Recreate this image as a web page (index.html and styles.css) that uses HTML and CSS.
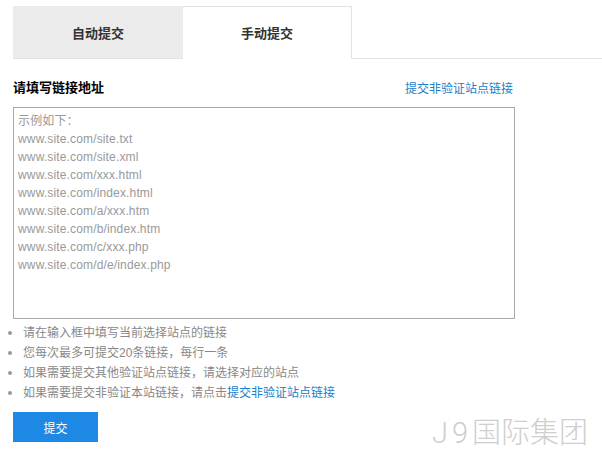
FILE: index.html
```html
<!DOCTYPE html>
<html lang="zh-CN">
<head>
    <meta charset="UTF-8">
    <title>手动提交</title>
    <link rel="stylesheet" href="styles.css">
</head>
<body>
    <div class="tabs">
        <div class="tab">自动提交</div>
        <div class="tab active">手动提交</div>
    </div>

    <div class="form-head">
        <h3>请填写链接地址</h3>
        <a href="#">提交非验证站点链接</a>
    </div>

    <div class="url-box">
        <div>示例如下：</div>
        <div>www.site.com/site.txt</div>
        <div>www.site.com/site.xml</div>
        <div>www.site.com/xxx.html</div>
        <div>www.site.com/index.html</div>
        <div>www.site.com/a/xxx.htm</div>
        <div>www.site.com/b/index.htm</div>
        <div>www.site.com/c/xxx.php</div>
        <div>www.site.com/d/e/index.php</div>
    </div>

    <ul class="tips">
        <li>请在输入框中填写当前选择站点的链接</li>
        <li>您每次最多可提交20条链接，每行一条</li>
        <li>如果需要提交其他验证站点链接，请选择对应的站点</li>
        <li>如果需要提交非验证本站链接，请点击<a href="#">提交非验证站点链接</a></li>
    </ul>

    <button class="submit-btn">提交</button>

    <div class="watermark"><span class="watermark-latin">J9</span>国际集团</div>
</body>
</html>
```

FILE: styles.css
```css
* {
    box-sizing: border-box;
}
html, body {
    height: 100%;
}
body {
    margin: 0;
    padding: 6px 0 0 13px;
    position: relative;
    overflow: hidden;
    background: #fff;
    font-family: "Liberation Sans", Arial, "Noto Sans CJK SC", sans-serif;
    font-size: 12px;
    color: #333;
}
a {
    color: #1a7fc9;
    text-decoration: none;
}
.tabs {
    display: flex;
    height: 53px;
    border-bottom: 1px solid #e2e2e2;
}
.tab {
    width: 170px;
    height: 52px;
    padding-top: 2px;
    line-height: 52px;
    text-align: center;
    font-size: 13px;
    font-weight: bold;
    background: #ebebeb;
}
.tab.active {
    width: 169px;
    height: 53px;
    padding-top: 1px;
    background: #fff;
    border-top: 1px solid #e2e2e2;
    border-right: 1px solid #e2e2e2;
}
.form-head {
    display: flex;
    justify-content: space-between;
    align-items: center;
    width: 500px;
    height: 18px;
    margin-top: 19px;
}
.form-head h3 {
    margin: 0 0 1px;
    font-size: 13px;
    color: #000;
}
.url-box {
    width: 502px;
    height: 212px;
    margin-top: 11px;
    padding: 4px;
    border: 1px solid #aaa;
    line-height: 18px;
    letter-spacing: 0.15px;
    color: #999;
}
.tips {
    list-style: none;
    margin: 4px 0 0;
    padding: 0 0 0 10px;
    line-height: 20px;
    color: #888;
}
.tips li {
    position: relative;
}
.tips li::before {
    content: "";
    position: absolute;
    left: -15px;
    top: 8px;
    width: 4px;
    height: 4px;
    border-radius: 50%;
    background: #999;
}
.submit-btn {
    display: block;
    width: 85px;
    height: 30px;
    margin-top: 9px;
    border: none;
    background: #1e88e5;
    color: #fff;
    font: inherit;
}
.watermark {
    position: absolute;
    left: 432px;
    top: 414px;
    font-family: Roboto, "Noto Sans CJK SC", sans-serif;
    font-size: 29px;
    font-weight: 300;
    line-height: 38px;
    color: #cfcfcf;
    white-space: nowrap;
}
.watermark-latin {
    letter-spacing: 4px;
}
```
